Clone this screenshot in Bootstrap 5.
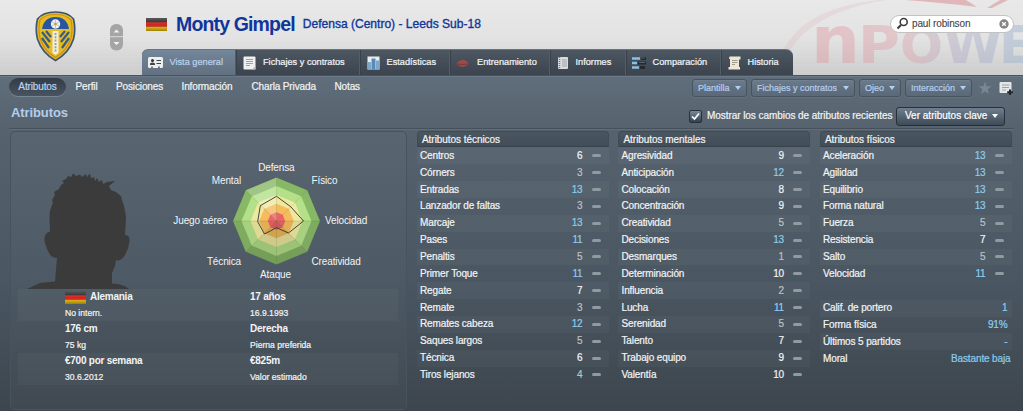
<!DOCTYPE html>
<html lang="es">
<head>
<meta charset="utf-8">
<meta name="viewport" content="width=device-width, initial-scale=1">
<title>Monty Gimpel</title>
<link href="https://cdn.jsdelivr.net/npm/bootstrap@5.3.0/dist/css/bootstrap.min.css" rel="stylesheet">
<style>
body{font-family:"Liberation Sans",Arial,sans-serif;font-size:10px;letter-spacing:-.13px;line-height:1.2;color:#f2f4f6;width:1023px;height:411px;overflow:hidden;background:linear-gradient(#606e7b 75px,#56626e 130px,#4a5661 280px,#3d464e 411px);-webkit-text-stroke:.2px}
svg{display:block;flex:none}
.masthead{height:75px;position:relative;background:repeating-linear-gradient(rgba(255,255,255,.06) 0 1px,transparent 1px 2px),linear-gradient(#e8e8e8,#e2e2e2 50%,#cbcbcb);color:#10359b}
.sponsor{position:absolute;right:0;top:0;letter-spacing:0}
.crest-cell{width:142px;padding:11px 0 0 35px}
.pager{margin:13px 0 0 34px}
.title-row{height:49px;padding:0 9px 0 4px}
.player{font-size:19.5px;font-weight:700;letter-spacing:-.85px;margin:0 8px 0 9px;line-height:25px;-webkit-text-stroke:0}
.role{font-size:12.05px;letter-spacing:0;-webkit-text-stroke:.35px}
.search{width:124px;height:18px;border-radius:9px;background:#fff;border:1px solid #c2c2c2;color:#444;padding:0 4px 0 5px;margin-top:-2px;position:relative;-webkit-text-stroke:.1px}
.maintabs{height:26px;width:651px;font-size:9.2px;letter-spacing:0;color:#f4f6f8;background:linear-gradient(#4c5762,#3c444e);border-radius:6px 7px 0 0;overflow:hidden;border-top:1px solid #69747f}
.maintabs a{color:inherit;text-decoration:none;height:100%;display:flex;align-items:center;border-left:1px solid #525d68;box-shadow:inset 1px 0 #38414a;padding-left:7px}
.maintabs a.on{background:linear-gradient(#74869a,#627080);color:#b9d3f1;border:0;box-shadow:none;padding-left:6px}
.subbar{height:25px;border-top:1px solid #46525e;box-shadow:inset 0 1px #6b7988;padding:0 10px 0 9px}
.subnav{margin-top:-2px}
.subnav a{color:#f2f4f6;text-decoration:none}
.subnav .on{background:linear-gradient(#323c47,#485460);box-shadow:0 1px #7a8794;border-radius:10px;width:57px;height:18px;line-height:18px;text-align:center;color:#b9d3f1}
.drop{height:18px;border:1px solid #465360;border-radius:3px;background:linear-gradient(#6b7b8b,#5a6878);box-shadow:0 1px #65727f, inset 0 1px #76869680;color:#b5cfee;font-size:9px;letter-spacing:0;padding:0 5px;display:flex;align-items:center;justify-content:space-between;line-height:1}
.caret{width:0;height:0;border:3.5px solid transparent;border-top:4.5px solid currentColor;border-bottom:0}
.headline{height:29px;margin:0 9px;padding:0 9px 0 2px;border-bottom:1px solid #46515c;box-shadow:0 1px #606d79}
.headline h1{font-size:13px;font-weight:700;letter-spacing:-.1px;color:#b5cdeb;margin:-3px 0 0;-webkit-text-stroke:0}
.tick{width:13px;height:13px;border-radius:2px;border:1px solid #28323c;background:linear-gradient(#7b8997,#343f4b);margin-right:5px}
.keybtn{width:109px;height:19px;border:1px solid #25303a;border-radius:3px;background:linear-gradient(#6f7f8f,#3d4a57);color:#fff;padding:0 6px 0 8px;line-height:1}
.profile{width:397px;height:279px;border-radius:5px;border:1px solid #475460;background:rgba(255,255,255,.02)}
.fact{height:32px;margin:0 8px 0 7px;padding-left:47px}
.fact.band,.attr:nth-child(even){background:rgba(255,255,255,.03)}
.fact>div{width:185px;flex:none}
.fact>div+div{width:auto}
.fact b{font-size:10px;letter-spacing:-.25px;line-height:16px;height:16px;display:flex;align-items:center;-webkit-text-stroke:0}
.fact span{font-size:8.6px;letter-spacing:0;line-height:15px;display:block;padding-top:1px}
.cols{margin-left:9.5px;gap:9.5px}
.attrcol{width:192px}
.coltitle{height:16.4px;line-height:16px;padding-left:4.5px;background:linear-gradient(#4a5660,#424d57);border:1px solid #404b55;border-bottom-color:#37424c;border-radius:4px 4px 0 0;letter-spacing:-.05px}
.attr{height:16.87px;padding:0 8px 0 3.5px}
.attr i{width:9px;height:3px;border-radius:1.5px;background:#929aa1;margin-left:9px}
.hi{color:#8ccdee}.lo{color:#bcc1c6}
.extra{margin-top:17.5px}
.extra .attr{padding-right:4px}
.extra .attr:nth-child(even){background:none}
.extra .attr:nth-child(odd){background:rgba(255,255,255,.03)}
</style>
</head>
<body>
<svg width="0" height="0" class="position-absolute">
 <defs>
  <linearGradient id="shine" x2="0" y2="1"><stop offset="0" stop-color="#fff" stop-opacity=".28"/><stop offset=".5" stop-color="#fff" stop-opacity=".06"/><stop offset="1" stop-opacity=".3"/></linearGradient>
  <symbol id="de" viewBox="0 0 21 13"><rect width="21" height="13" fill="#191919"/><rect y="4.3" width="21" height="4.4" fill="#d81410"/><rect y="8.7" width="21" height="4.3" fill="#e0b400"/><rect width="21" height="13" fill="url(#shine)"/></symbol>
 </defs>
</svg>

<header class="masthead d-flex">
 <svg class="sponsor" width="260" height="75" viewBox="763 0 260 75">
  <defs><linearGradient id="np" gradientUnits="userSpaceOnUse" x1="816" x2="1023" y1="0" y2="0"><stop offset="0" stop-color="#df8f96"/><stop offset=".45" stop-color="#dd9ca6"/><stop offset=".7" stop-color="#a8a6c6"/><stop offset="1" stop-color="#8caccc"/></linearGradient></defs>
  <path d="M778 66Q790 10 878 0H886Q800 14 783 66Z" fill="#e0b5b8" opacity=".25"/>
  <path d="M905 0Q945 3 977 7L966 0ZM1000 0L987 8H992L1008 0Z" fill="#d87c80" opacity=".45"/>
  <g fill="url(#np)" opacity=".38" font-family="DejaVu Sans" font-weight="700">
   <text x="811" y="63" font-size="66" textLength="49" lengthAdjust="spacingAndGlyphs">n</text>
   <text x="858" y="63" font-size="51" textLength="42" lengthAdjust="spacingAndGlyphs">P</text>
   <text x="900" y="63" font-size="50" textLength="43" lengthAdjust="spacingAndGlyphs">O</text>
   <text x="943" y="63" font-size="51" textLength="60" lengthAdjust="spacingAndGlyphs">W</text>
   <text x="999" y="63" font-size="51">E</text>
  </g>
 </svg>
 <div class="crest-cell d-flex align-items-start">
  <svg width="41" height="51" viewBox="0 0 41 51">
   <path d="M20.500 1Q33 1 38.500 8Q41 18 38.500 28Q34 42 20.500 49.500Q7 42 2.500 28Q0 18 2.500 8Q8 1 20.500 1Z" fill="#e4bd22" stroke="#3b5674" stroke-width="1.700"/>
   <path d="M20.500 3.500Q31 3.500 36 9Q38 18 36 27Q32 40 20.500 46.500Q9 40 5 27Q3 18 5 9Q10 3.500 20.500 3.500Z" fill="none" stroke="#d28c1a" stroke-width="1.200"/>
   <path d="M7 18Q9 6 20.500 6T34 18Z" fill="#2954a0"/>
   <path d="M7 21L15 31M7 27L14 37M11 20L16 26M34 21L26 31M34 27L27 37M30 20L25 26" stroke="#3b5c82" stroke-width="2.200"/>
   <path d="M17.500 20H23.500V42L20.500 44L17.500 42Z" fill="#f3eed9"/><path d="M20.500 22V41" stroke="#8f9cba" stroke-width="1.800" stroke-dasharray="2 1.300"/>
   <circle cx="20.500" cy="13" r="4.700" fill="#eef1f5"/><path d="M20.500 9V17M17 11L24 15M24 11L17 15" stroke="#aeb8c8" stroke-width=".8"/><circle cx="20.500" cy="13" r="1.300" fill="#d7a01b"/>
  </svg>
  <svg class="pager" width="13" height="27" viewBox="0 0 13 27"><rect width="13" height="26.500" rx="6" fill="#a5a5a5"/><path d="M0 12.700H13" stroke="#dcdcdc"/><path d="M3.500 8.500L6.500 5.500L9.500 8.500ZM3.500 18L6.500 21L9.500 18Z" fill="#f4f4f4"/></svg>
 </div>
 <div class="flex-grow-1 position-relative">
  <div class="title-row d-flex align-items-center">
   <svg width="21" height="13"><use href="#de"/></svg>
   <div class="player">Monty Gimpel</div>
   <div class="role">Defensa (Centro) - Leeds Sub-18</div>
   <div class="search d-flex align-items-center ms-auto">
    <svg width="13" height="13" viewBox="0 0 13 13" fill="none" stroke="#3d3d3d"><circle cx="7.700" cy="5" r="3.500" stroke-width="1.600"/><path d="M5 8L1.500 11.500" stroke-width="2.200"/></svg>
    <span class="flex-grow-1" style="margin-left:3px">paul robinson</span>
    <svg width="10" height="10" viewBox="0 0 10 10"><circle cx="5" cy="5" r="4.700" fill="#858585"/><path d="M3.200 3.200L6.800 6.800M6.800 3.200L3.200 6.800" stroke="#fff" stroke-width="1.400"/></svg>
   </div>
  </div>
  <nav class="maintabs d-flex">
   <a href="#" class="on" style="width:93px"><svg width="21.500" height="14" viewBox="0 0 21.500 14"><rect y="1" width="15" height="11" rx="1.500" fill="#eceeef"/><circle cx="4.500" cy="4.500" r="1.500" fill="#333"/><path d="M2 9V7.500Q4.500 5.500 7 7.500V9ZM8.500 4H13V5H8.500ZM8.500 7H13V8H8.500Z" fill="#444"/><path d="M3 10.500h2v1.500h-2zM10 10.500h2v1.500h-2z" fill="#6d7d8e"/></svg>Vista general</a>
   <a href="#" style="width:124px"><svg width="20" height="14" viewBox="0 0 20 14"><rect x=".5" y=".5" width="12" height="13" rx="1" fill="#eef0f1"/><path d="M3 3.500H10M3 5.500H10M3 7.500H10M3 9.500H7" stroke="#9ba2a8"/><path d="M9 13.500L12.500 10V13.500Z" fill="#b5babf"/></svg>Fichajes y contratos</a>
   <a href="#" style="width:90px"><svg width="19.500" height="14" viewBox="0 0 19.500 14"><rect x=".5" y=".5" width="12" height="13" fill="#e9edf0"/><path d="M1 6H4V13H1ZM9 4.500H12V13H9Z" fill="#7fa6c6"/><path d="M4.500 2.500H8.500V13.500H4.500Z" fill="#5a8ab3"/></svg>Estadísticas</a>
   <a href="#" style="width:100px;padding-left:5px"><svg width="22" height="12" viewBox="0 0 22 12"><path d="M1 7Q3 3.500 6 3Q7.500 2 9.500 3Q13 4 14 7Q11 10 7.500 10T1 7Z" fill="#9a4a47"/><path d="M1 7Q7 8 14 7" stroke="#6e3638" stroke-width=".8" fill="none"/></svg>Entrenamiento</a>
   <a href="#" style="width:76px"><svg width="18.500" height="14" viewBox="0 0 18.500 14"><rect x="1" y="1" width="10" height="12" rx="1" fill="#d9dcde"/><path d="M2.500 1V13" stroke="#777" stroke-width="1.500" stroke-dasharray="1 1"/><path d="M5 4H10M5 6H10M5 8H10M5 10H10" stroke="#8d949a" stroke-width=".8"/></svg>Informes</a>
   <a href="#" style="width:95px;padding-left:6px"><svg width="20.500" height="14" viewBox="0 0 20.500 14"><path d="M0 2.500H8M0 7H5M0 11.500H7" stroke="#8cc0e2" stroke-width="2.500"/><path d="M9 2.500H14M6 7H14M8 11.500H13" stroke="#24292f" stroke-width="3"/><path d="M9 2H13M7 6.500H13" stroke="#66727e" stroke-width=".8"/></svg>Comparación</a>
   <a href="#" class="flex-grow-1"><svg width="19.500" height="14" viewBox="0 0 19.500 14"><path d="M1.500 .5H12.500V3.500H11V11H12V13.500H.5V11H2V3H1Z" fill="#ece8d4"/><path d="M4 4.500H9.500M4 6.500H9.500M4 8.500H7" stroke="#a09e90"/></svg>Historia</a>
  </nav>
 </div>
</header>

<div class="subbar d-flex align-items-center">
 <nav class="subnav d-flex align-items-center">
  <a href="#" class="on">Atributos</a>
  <a href="#" style="margin-left:9.500px;width:40.500px">Perfil</a>
  <a href="#" style="width:65.500px">Posiciones</a>
  <a href="#" style="width:70px">Información</a>
  <a href="#" style="width:83px">Charla Privada</a>
  <a href="#">Notas</a>
 </nav>
 <div class="d-flex align-items-center ms-auto">
  <button class="drop" style="width:55px">Plantilla<span class="caret"></span></button>
  <button class="drop" style="width:104px;margin-left:4px">Fichajes y contratos<span class="caret"></span></button>
  <button class="drop" style="width:42px;margin-left:4px">Ojeo<span class="caret"></span></button>
  <button class="drop" style="width:67px;margin-left:4px">Interacción<span class="caret"></span></button>
  <svg style="margin-left:6px" width="14" height="14" viewBox="0 0 14 14"><path d="M7 .5L8.600 5.200L13.500 5.300L9.600 8.300L11 13L7 10.200L3 13L4.400 8.300L.5 5.300L5.400 5.200Z" fill="#798693"/></svg>
  <svg style="margin-left:7px" width="14" height="15" viewBox="0 0 14 15"><path d="M1.500 1H11.500Q12.500 1 12.500 2V12H1.500Q.5 12 .5 11V2Q.5 1 1.500 1Z" fill="#e4e7e9"/><path d="M3 4H10.500M3 6.500H10M3 9H7" stroke="#9aa1a8"/><path d="M11 8.500V14M8.200 11.300H13.800" stroke="#20262c" stroke-width="2"/></svg>
 </div>
</div>

<div class="headline d-flex align-items-center">
 <h1>Atributos</h1>
 <div class="d-flex align-items-center ms-auto pt-1">
  <span class="tick"><svg width="11" height="11" viewBox="0 0 11 11"><path d="M2 5.500L4.500 8L9 2.500" fill="none" stroke="#fff" stroke-width="1.700"/></svg></span>
  <span style="letter-spacing:-.06px;width:189px">Mostrar los cambios de atributos recientes</span>
  <button class="keybtn d-flex align-items-center justify-content-between">Ver atributos clave<span class="caret"></span></button>
 </div>
</div>

<main class="d-flex" style="padding:2px 0 0 10px">
 <section class="profile">
  <svg width="395" height="157" viewBox="11 132 395 157" font-size="10" fill="#f2f4f6">
   <path d="M27 289L40 283L55 281.500L57 258Q51 258 48.500 252Q45 245 44.500 240Q44 233 50 231.500L49.500 217L50 211L53 202L52 200L55 195L54 192L59 189L61 185L64 183L62 181L66 179L68 176L71 177L73 173.500L76 176L80 174.500L82 177L86 174L87 177L90 173.500L91 178L94 177L95 181L97 178L99 182L102 180L103 184L107 182L115 181L109 186L111 190L116 192L121 196L122 200L124 206L125 211L126 217L125 235Q130 235 129.500 241Q129 248 125 255Q121 262 116 260L115 266L112 273V283.500Q124 284 129 289Z" fill="#3b3b3b"/>
   <g id="radar" transform="translate(276.500 221)"></g>
   <g text-anchor="middle"><text x="276.300" y="170.500">Defensa</text><text x="275.500" y="278">Ataque</text></g>
   <g text-anchor="end"><text x="241" y="184">Mental</text><text x="227.500" y="224">Juego aéreo</text><text x="241" y="265">Técnica</text></g>
   <text x="311.500" y="184">Físico</text><text x="325" y="224">Velocidad</text><text x="311.500" y="265">Creatividad</text>
  </svg>
  <div class="fact band d-flex"><div><b><svg class="me-1" width="21" height="13"><use href="#de"/></svg>Alemania</b><span>No intern.</span></div><div><b>17 años</b><span>16.9.1993</span></div></div>
  <div class="fact d-flex"><div><b>176 cm</b><span>75 kg</span></div><div><b>Derecha</b><span>Pierna preferida</span></div></div>
  <div class="fact band d-flex"><div><b>€700 por semana</b><span>30.6.2012</span></div><div><b>€825m</b><span>Valor estimado</span></div></div>
 </section>
 <section class="cols d-flex">
  <div class="attrcol" data-set="tecnicos"><div class="coltitle">Atributos técnicos</div></div>
  <div class="attrcol" data-set="mentales"><div class="coltitle">Atributos mentales</div></div>
  <div class="attrcol" data-set="fisicos"><div class="coltitle">Atributos físicos</div>
   <div class="extra">
    <div class="attr d-flex align-items-center justify-content-between"><span>Calif. de portero</span><span class="hi">1</span></div>
    <div class="attr d-flex align-items-center justify-content-between"><span>Forma física</span><span class="hi">91%</span></div>
    <div class="attr d-flex align-items-center justify-content-between"><span>Últimos 5 partidos</span><span class="hi">-</span></div>
    <div class="attr d-flex align-items-center justify-content-between" style="padding-right:1px"><span>Moral</span><span class="hi">Bastante baja</span></div>
   </div>
  </div>
 </section>
</main>

<script src="https://cdn.jsdelivr.net/npm/bootstrap@5.3.0/dist/js/bootstrap.bundle.min.js"></script>
<script>
const sets = {
 tecnicos: {Centros:6,'Córners':3,Entradas:13,'Lanzador de faltas':3,Marcaje:13,Pases:11,Penaltis:5,'Primer Toque':11,Regate:7,Remate:3,'Remates cabeza':12,'Saques largos':5,'Técnica':6,'Tiros lejanos':4},
 mentales: {Agresividad:9,'Anticipación':12,'Colocación':8,'Concentración':9,Creatividad:5,Decisiones:13,Desmarques:1,'Determinación':10,Influencia:2,Lucha:11,Serenidad:5,Talento:7,'Trabajo equipo':9,'Valentía':10},
 fisicos: {'Aceleración':13,Agilidad:13,Equilibrio:13,'Forma natural':13,Fuerza:5,Resistencia:7,Salto:5,Velocidad:11}
};
document.querySelectorAll('[data-set]').forEach(col => {
 const rows = Object.entries(sets[col.dataset.set]).map(([name, v]) =>
  `<div class="attr d-flex align-items-center"><span class="flex-grow-1">${name}</span><span class="${v > 10 ? 'hi' : v < 6 ? 'lo' : ''}">${v}</span><i></i></div>`).join('');
 col.querySelector('.coltitle').insertAdjacentHTML('afterend', rows);
});

// Octagonal radar: rings, shaded wedges, then the player's outline
const pt = (r, k) => [r * Math.sin(k * Math.PI / 4), -r * Math.cos(k * Math.PI / 4)].map(n => n.toFixed(1)).join();
const oct = r => [...Array(8).keys()].map(k => pt(r, k)).join(' ');
const rings = [[43.5,'#87b866'],[35,'#b3e088'],[26,'#efe9a0'],[17.3,'#f5bb5c'],[8.7,'#ee6468']];
const shade = ['#fff0','#fff0','#0001','#0002','#0002','#0001','#fff0','#fff3'];
document.getElementById('radar').innerHTML =
 rings.map(([r, c]) => `<polygon points="${oct(r)}" fill="${c}"/>`).join('') +
 shade.map((c, k) => `<polygon points="0,0 ${pt(43.5, k)} ${pt(43.5, k + 1)}" fill="${c}" stroke="#5a7a3030" stroke-width=".5"/>`).join('') +
 '<polygon points="0,-24.7 14.200,-14.300 27,0 12,12 0,6.700 -12,13 -18.800,.7 -16.200,-15.300" fill="none" stroke="#333" stroke-width=".9"/>';
</script>
</body>
</html>
